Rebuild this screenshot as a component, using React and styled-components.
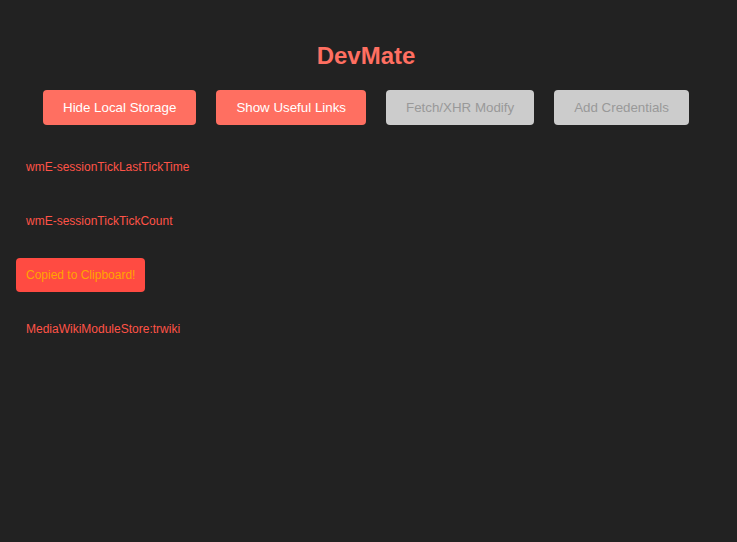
import styled, { createGlobalStyle } from "styled-components";

const GlobalStyle = createGlobalStyle`
  html, body {
    margin: 0;
    padding: 0;
    background: #222222;
  }
  body {
    font-family: "Liberation Sans", Arial, sans-serif;
  }
`

const Page = styled.div`
  min-height: 542px;
  background: #222222;
  padding: 41px 5px 0 0;
  box-sizing: border-box;
`

const Title = styled.h1`
  margin: 0;
  text-align: center;
  color: #ff6f61;
  font-size: 24px;
  font-weight: bold;
  line-height: 30px;
`

const Toolbar = styled.div`
  display: flex;
  justify-content: center;
  gap: 20px;
  margin-top: 19px;
`

const Button = styled.button`
  font-family: "Liberation Sans", Arial, sans-serif;
  font-size: 13.33px;
  line-height: 15px;
  padding: 10px 20px;
  border: none;
  border-radius: 4px;
  cursor: ${p => (p.$off ? "default" : "pointer")};
  background: ${p => (p.$off ? "#cccccc" : "#ff6f61")};
  color: ${p => (p.$off ? "#999999" : "#ffffff")};
`

const List = styled.div`
  display: flex;
  flex-direction: column;
  align-items: flex-start;
  gap: 20px;
  margin-top: 25px;
  padding-left: 16px;
`

const Item = styled.div`
  font-size: 12px;
  line-height: 14px;
  padding: 10px;
  border-radius: 4px;
  cursor: pointer;
  color: ${p => (p.$copied ? "#ffa500" : "#ff5347")};
  background: ${p => (p.$copied ? "#ff4b42" : "transparent")};
`

const keys = [
  { label: "wmE-sessionTickLastTickTime" },
  { label: "wmE-sessionTickTickCount" },
  { label: "Copied to Clipboard!", copied: true },
  { label: "MediaWikiModuleStore:trwiki" },
]

function App() {
  return (
    <Page>
      <GlobalStyle />
      <Title>DevMate</Title>
      <Toolbar>
        <Button>Hide Local Storage</Button>
        <Button>Show Useful Links</Button>
        <Button $off>Fetch/XHR Modify</Button>
        <Button $off>Add Credentials</Button>
      </Toolbar>
      <List>
        {keys.map(k => (
          <Item key={k.label} $copied={k.copied}>{k.label}</Item>
        ))}
      </List>
    </Page>
  )
}

export default App
